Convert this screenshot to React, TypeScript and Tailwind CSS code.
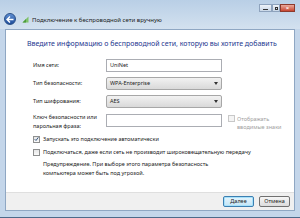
import React from 'react';

const font = { fontFamily: '"Segoe UI", "Noto Sans", "DejaVu Sans", sans-serif' };

const Check = ({ checked, disabled }: { checked?: boolean; disabled?: boolean }) => (
  <span
    className={`flex h-[7px] w-[7px] shrink-0 items-center justify-center border ${
      disabled ? 'border-[#c8c8c8] bg-[#f4f4f4]' : 'border-[#8e8f8f] bg-gradient-to-b from-[#e6e6e6] to-[#fafafa]'
    }`}
  >
    {checked && (
      <svg width="6" height="6" viewBox="0 0 6 6">
        <path d="M0.8 3.2 L2.4 4.8 L5.2 1" stroke="#3b5a82" strokeWidth="1.2" fill="none" />
      </svg>
    )}
  </span>
);

const Select = ({ value }: { value: string }) => (
  <div className="flex h-[13px] w-[116px] items-center justify-between rounded-[2px] border border-[#a7a7a7] bg-gradient-to-b from-[#f2f2f2] to-[#d9d9d9] pl-[3px] pr-[3px] text-[5.5px] text-[#222]">
    <span>{value}</span>
    <svg width="4" height="3" viewBox="0 0 4 3">
      <path d="M0 0 H4 L2 3 Z" fill="#333" />
    </svg>
  </div>
);

export default function App() {
  return (
    <div className="flex h-[218px] w-[300px] flex-col bg-[#c4d6ea]" style={font}>
      {/* title bar */}
      <div className="relative flex h-[29px] shrink-0 items-end bg-gradient-to-b from-[#b9cfe6] to-[#d3e1ef] pb-[4px] pl-[4px]">
        <div className="flex h-[12px] w-[12px] items-center justify-center rounded-full border border-[#2a4f87] bg-gradient-to-b from-[#5f8fd3] to-[#1c4c9b]">
          <svg width="8" height="7" viewBox="0 0 8 7">
            <path d="M4 0.5 L1 3.5 L4 6.5 M1 3.5 H7.5" stroke="#fff" strokeWidth="1.4" fill="none" />
          </svg>
        </div>
        <svg className="ml-[6px] mb-[2px]" width="7" height="7" viewBox="0 0 7 7">
          <path d="M0.5 6.5 L6.5 0.5 L6.5 6.5 Z" fill="#7fc26a" />
          <path d="M0.5 6.5 L4 3 L4 6.5 Z" fill="#4b9a3b" />
        </svg>
        <span className="mb-[2px] ml-[3px] text-[6px] leading-none text-[#1b1b1b]">
          Подключение к беспроводной сети вручную
        </span>
        <div className="absolute right-[5px] top-[4px] flex items-start">
          <div className="flex h-[8px] w-[13px] items-end justify-center border border-[#8ea3bd] bg-gradient-to-b from-[#eef3f9] to-[#c9d7e7] pb-[1px]">
            <div className="h-[1px] w-[5px] bg-[#333]" />
          </div>
          <div className="flex h-[8px] w-[8px] items-center justify-center border border-[#8ea3bd] bg-gradient-to-b from-[#eef3f9] to-[#c9d7e7]">
            <div className="h-[3px] w-[3px] border border-[#333]" />
          </div>
          <div className="flex h-[8px] w-[15px] items-center justify-center border border-[#8d3a2d] bg-gradient-to-b from-[#e9a99c] to-[#c7432e] text-[6px] font-bold leading-none text-white">
            ×
          </div>
        </div>
      </div>

      {/* content */}
      <div className="mx-[5px] flex flex-1 flex-col border border-[#8fa7c3] bg-white">
        <div className="flex flex-1 flex-col pl-[21px] pt-[10px]">
          <div className="whitespace-nowrap text-[7px] leading-none text-[#24378f]">
            Введите информацию о беспроводной сети, которую вы хотите добавить
          </div>

          <div className="mt-[12px] flex flex-col gap-[5px] pl-[6px] text-[5.5px] text-[#222]">
            <div className="flex items-center">
              <span className="w-[73px]">Имя сети:</span>
              <div className="flex h-[13px] w-[116px] items-center border border-[#abadb3] pl-[3px]">UniNet</div>
            </div>
            <div className="flex items-center">
              <span className="w-[73px]">Тип безопасности:</span>
              <Select value="WPA-Enterprise" />
            </div>
            <div className="flex items-center">
              <span className="w-[73px]">Тип шифрования:</span>
              <Select value="AES" />
            </div>
            <div className="flex items-start">
              <span className="w-[73px] leading-[9px]">
                Ключ безопасности или
                <br />
                парольная фраза:
              </span>
              <div className="mt-[1px] h-[13px] w-[116px] border border-[#abadb3]" />
              <div className="ml-[6px] mt-[2px] flex items-start gap-[2px] text-[#a0a0a0]">
                <Check disabled />
                <span className="leading-[8px]">
                  Отображать
                  <br />
                  вводимые знаки
                </span>
              </div>
            </div>
          </div>

          <div className="mt-[4px] flex flex-col gap-[5px] pl-[6px] text-[5.5px] text-[#222]">
            <div className="flex items-center gap-[3px]">
              <Check checked />
              <span>Запускать это подключение автоматически</span>
            </div>
            <div className="flex flex-col">
              <div className="flex items-center gap-[3px]">
                <Check />
                <span>Подключаться, даже если сеть не производит широковещательную передачу</span>
              </div>
              <div className="mt-[3px] pl-[10px] leading-[9px]">
                Предупреждение. При выборе этого параметра безопасность
                <br />
                компьютера может быть под угрозой.
              </div>
            </div>
          </div>
        </div>

        <div className="flex h-[18px] shrink-0 items-center justify-end gap-[5px] border-t border-[#dfdfdf] bg-[#f0f0f0] pr-[4px] text-[5.5px] text-[#222]">
          <div className="flex h-[11px] w-[31px] items-center justify-center rounded-[2px] border border-[#3c7fb1] bg-gradient-to-b from-[#e5f4fc] to-[#c4e5f6] shadow-[inset_0_0_0_1px_#a6e1fb]">
            Далее
          </div>
          <div className="flex h-[11px] w-[31px] items-center justify-center rounded-[2px] border border-[#707070] bg-gradient-to-b from-[#f6f6f6] to-[#dcdcdc]">
            Отмена
          </div>
        </div>
      </div>
      <div className="h-[7px] shrink-0 border-b border-[#4d6a8a]" />
    </div>
  );
}
